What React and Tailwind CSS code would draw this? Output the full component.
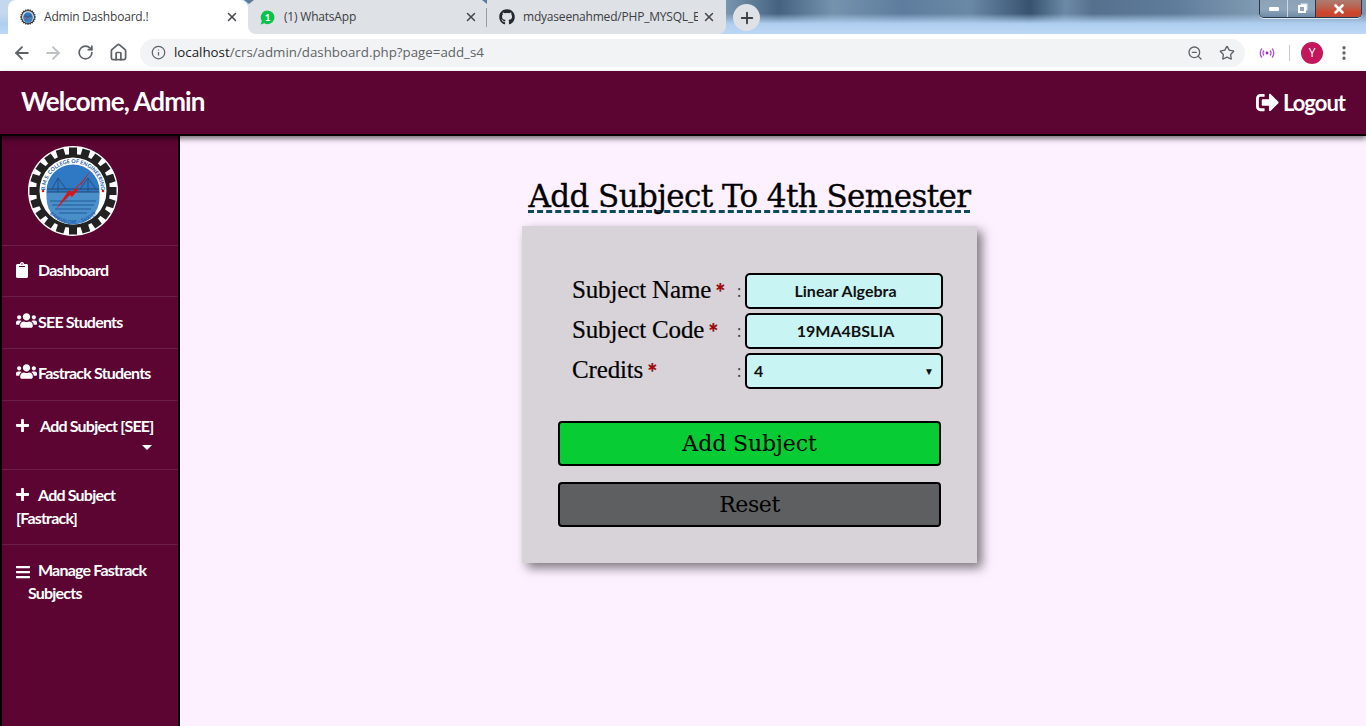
import React from "react";
import { ArrowLeft, ArrowRight, RotateCw, Home, Info, ZoomOut, Star, X, Plus, EllipsisVertical } from "lucide-react";
import { FaClipboard, FaUsers, FaPlus, FaBars, FaSignOutAlt, FaGithub } from "react-icons/fa";

const sans = "font-['Lato','Open_Sans',sans-serif]";
const slab = "font-['DejaVu_Serif',serif]";
const label = "font-['Liberation_Serif',serif]";

function Logo({ size = 90 }) {
  const teeth = Array.from({ length: 20 }, (_, i) => i * 18);
  return (
    <svg width={size} height={size} viewBox="0 0 90 90">
      <defs>
        <path id="arcTop" d="M 17 45 A 28 28 0 0 1 73 45" />
        <path id="arcBottom" d="M 16 60 A 32.6 32.6 0 0 0 74 60" />
      </defs>
      <circle cx="45" cy="45" r="45" fill="#fff" />
      {teeth.map((a) => (
        <rect key={a} x="41" y="1.5" width="8" height="10" fill="#222" transform={`rotate(${a} 45 45)`} />
      ))}
      <circle cx="45" cy="45" r="37" fill="#222" />
      <circle cx="45" cy="45" r="33.5" fill="#fff" />
      <circle cx="45" cy="45" r="26.5" fill="#2f78c4" />
      <path d="M18.5 46h53v6a26.5 26.5 0 0 1-53 0z" fill="#4a8fca" />
      <path d="M22 55h46M24 59h42M27 63h36M31 67h28" stroke="#1f5b98" strokeWidth="1.2" />
      <path d="M19 43h52M19 46h52" stroke="#24466e" strokeWidth="1.2" />
      <path d="M24 43 30 32 38 43M52 43l8-11 8 11M30 32v14M60 32v14" stroke="#24466e" strokeWidth="0.8" fill="none" />
      <path d="M63 24 48 43l2 1-6 7-2-2-14 14 13-19 3 2 7-8 2 1z" fill="#d81616" />
      <circle cx="15" cy="45" r="1.3" fill="#c81e1e" />
      <circle cx="75" cy="45" r="1.3" fill="#c81e1e" />
      <text fontSize="5.4" fontWeight="700" fill="#1e5da8" fontFamily="Lato, sans-serif">
        <textPath href="#arcTop" startOffset="50%" textAnchor="middle">B.M.S. COLLEGE OF ENGINEERING</textPath>
      </text>
      <text fontSize="5" fontWeight="700" fill="#1e5da8" fontFamily="Lato, sans-serif">
        <textPath href="#arcBottom" startOffset="50%" textAnchor="middle">BANGALORE - 560019</textPath>
      </text>
    </svg>
  );
}

function Tab({ icon, title, className, closeClass = "" }) {
  return (
    <div className={`flex h-[34px] items-center pl-3 text-[12px] tracking-[-0.2px] text-[#3c4043] font-['Open_Sans',sans-serif] ${className}`}>
      <span className="flex w-6 shrink-0 items-center">{icon}</span>
      <span className="min-w-0 flex-1 overflow-hidden whitespace-nowrap">{title}</span>
      <X size={14} strokeWidth={2.5} className={`ml-1 shrink-0 text-[#44474b] ${closeClass}`} />
    </div>
  );
}

function WhatsAppIcon() {
  return (
    <svg width="15" height="15" viewBox="0 0 15 15">
      <path d="M7.6 0.5a6.8 6.8 0 1 1-3.2 12.8L0.6 14.5l1.2-3.6A6.8 6.8 0 0 1 7.6 0.5z" fill="#0bc24a" />
      <text x="7.6" y="11" textAnchor="middle" fontSize="10" fontWeight="700" fill="#fff" fontFamily="Lato, sans-serif">1</text>
    </svg>
  );
}

function TabStrip() {
  return (
    <div className="relative flex h-[34px] items-end bg-[linear-gradient(180deg,transparent_0%,transparent_40%,#b0cff0_70%,#bcd8f5_100%),linear-gradient(90deg,#c3d8ee_0%,#c3d8ee_50%,#7b98b1_53%,#456280_57%,#7593ad_61%,#5e7d9e_66%,#6a89a6_71%,#36526f_75.4%,#6c8aa6_78%,#54708d_80%,#5f7d9b_86%,#7f9ab2_92%,#7b96ae_100%)] pl-2">
      <Tab title="Admin Dashboard.!" icon={<Logo size={16} />} className="w-[240px] rounded-t-lg bg-white pr-[9px]" />
      <div className="relative w-[239px] bg-white">
        <Tab title="(1) WhatsApp" icon={<WhatsAppIcon />} className="rounded-bl-lg bg-[#dee1e6] pr-[9px]" />
        <span className="absolute left-[-4px] top-0 h-0 w-0 border-x-[5px] border-t-[4px] border-x-transparent border-t-[#5c7b9c]" />
        <span className="absolute right-[-5px] top-0 h-0 w-0 border-x-[5px] border-t-[4px] border-x-transparent border-t-[#5c7b9c]" />
      </div>
      <div className="relative w-[239px]">
        <span className="absolute left-[-1px] top-[8px] h-[19px] w-px bg-[#9a9da1]" />
        <Tab
          title="mdyaseenahmed/PHP_MYSQL_E"
          icon={<FaGithub size={16} className="text-[#24292e]" />}
          className="rounded-br-lg bg-[#dee1e6] pr-[10px]"
        />
      </div>
      <span className="ml-[7px] mb-[3px] flex h-[27px] w-[27px] items-center justify-center rounded-full bg-[#dee1e6]">
        <Plus size={18} strokeWidth={2.5} className="text-[#3c4043]" />
      </span>
      {/* window buttons */}
      <div className="absolute right-[4px] top-0 flex h-[18px] w-[103px] overflow-hidden rounded-b-[5px] border border-t-0 border-[#26384c] shadow-[0_1px_0_rgba(255,255,255,0.7)]">
        <span className="flex w-[28px] items-center justify-center border-r border-[#dfe7ee]/80 bg-[linear-gradient(180deg,#8da2b6,#8fa6bb_55%,#6e8aa5)]">
          <span className="h-[4px] w-[10px] rounded-[1px] bg-white" />
        </span>
        <span className="flex w-[28px] items-center justify-center border-r border-[#26384c] bg-[linear-gradient(180deg,#8da2b6,#8fa6bb_55%,#6e8aa5)]">
          <span className="relative h-[8px] w-[8px] border-2 border-white shadow-[2px_-2px_0_-0.5px_#e8eef5]" />
        </span>
        <span className="flex flex-1 items-center justify-center bg-[linear-gradient(180deg,#ad7c72,#b9604d_45%,#d2432a_75%,#b94a36)]">
          <X size={14} strokeWidth={4.5} className="text-white" />
        </span>
      </div>
    </div>
  );
}

function Toolbar() {
  return (
    <div className="flex h-[37px] items-center bg-white">
      <ArrowLeft size={20} strokeWidth={2.2} className="ml-[12px] text-[#5f6368]" />
      <ArrowRight size={20} strokeWidth={2.2} className="ml-[11px] text-[#bdc1c6]" />
      <RotateCw size={17} strokeWidth={2.4} className="ml-[14px] text-[#5f6368]" />
      <Home size={19} strokeWidth={2.2} className="ml-[15px] text-[#5f6368]" />
      <div className="ml-[12px] flex h-[28px] w-[1105px] items-center rounded-full bg-[#f1f3f4] pl-[11px] pr-[10px]">
        <Info size={15} strokeWidth={2} className="text-[#5f6368]" />
        <span className="ml-[8px] flex-1 text-[13.3px] text-[#5f6368] font-['Open_Sans',sans-serif]">
          <span className="text-[#202124]">localhost</span>/crs/admin/dashboard.php?page=add_s4
        </span>
        <ZoomOut size={16} strokeWidth={2} className="text-[#5f6368]" />
        <Star size={16} strokeWidth={2} className="ml-[16px] text-[#5f6368]" />
      </div>
      <svg width="16" height="12" viewBox="0 0 16 12" className="ml-[14px]" fill="none" stroke="#b44fd0" strokeWidth="1.3">
        <circle cx="8" cy="6" r="1.4" fill="#9c27b0" stroke="none" />
        <path d="M5 3.5a3.5 3.5 0 0 0 0 5M11 3.5a3.5 3.5 0 0 1 0 5M3 1.5a6.5 6.5 0 0 0 0 9M13 1.5a6.5 6.5 0 0 1 0 9" />
      </svg>
      <span className="ml-[14px] h-[16px] w-px bg-[#c8cacd]" />
      <span className="ml-[11px] flex h-[22px] w-[22px] items-center justify-center rounded-full bg-[#c2185b] text-[12px] text-white font-['Open_Sans',sans-serif]">Y</span>
      <EllipsisVertical size={18} strokeWidth={2.5} className="ml-[12px] text-[#5f6368]" />
    </div>
  );
}

function NavItem({ icon, className, children }) {
  return (
    <div className={`border-b border-[#6d1d49] px-[14px] text-[16px] leading-[23px] font-bold tracking-[-0.8px] text-white ${sans} ${className}`}>
      {icon}
      {children}
    </div>
  );
}

function Sidebar() {
  return (
    <aside className="w-[180px] shrink-0 border-x-2 border-black bg-[#5c0432]">
      <div className="flex h-[110px] justify-center border-b border-[#6d1d49] pr-[34px] pt-[10px]">
        <Logo />
      </div>
      <NavItem className="h-[51px] pt-[12px]" icon={<FaClipboard className="ml-[-2px] mr-[8px] inline-block align-[-2px] text-[16px]" />}>Dashboard</NavItem>
      <NavItem className="h-[52px] pt-[13px]" icon={<FaUsers className="mr-[1px] inline-block align-[-3px] text-[21px]" />}>SEE Students</NavItem>
      <NavItem className="h-[52px] pt-[12px]" icon={<FaUsers className="mr-[1px] inline-block align-[-3px] text-[21px]" />}>Fastrack Students</NavItem>
      <NavItem className="h-[69px] pt-[13px]" icon={<FaPlus className="ml-[-1px] mr-[10px] inline-block align-[-1px] text-[15px]" />}>
        Add Subject [SEE]
        <div className="mt-[8px] flex justify-end pr-[12px]">
          <span className="h-0 w-0 border-x-[5px] border-t-[5px] border-x-transparent border-t-white" />
        </div>
      </NavItem>
      <NavItem className="h-[75px] pt-[13px]" icon={<FaPlus className="ml-[-1px] mr-[8px] inline-block align-[-1px] text-[15px]" />}>
        Add Subject
        <br />
        [Fastrack]
      </NavItem>
      <div className={`pl-[26px] pt-[13px] pr-[14px] text-[16px] leading-[23px] font-bold tracking-[-0.8px] text-white ${sans}`}>
        <FaBars className="ml-[-13px] mr-[7px] inline-block text-[16px]" />
        Manage Fastrack Subjects
      </div>
    </aside>
  );
}

function Field({ name, value, select }) {
  return (
    <div className="flex h-[36px] items-center">
      <div className={`mb-[1px] w-[165px] text-[25px] tracking-[-0.15px] text-black [-webkit-text-stroke:0.2px_black] ${label}`}>
        {name}
        <span className={`ml-[4px] align-[-4px] font-bold text-[#c00000] ${sans} text-[24px]`}>*</span>
      </div>
      <span className="w-[8px] text-[16px] text-[#444]">:</span>
      <div className={`flex h-[36px] w-[198px] items-center rounded-[5px] border-2 border-black bg-[#c9f4f4] text-[16px] font-bold text-[#111] ${sans} ${select ? "justify-between px-[7px]" : "justify-center pl-[3px]"}`}>
        <span>{value}</span>
        {select && <span className="text-[10px]">▼</span>}
      </div>
    </div>
  );
}

function SubjectForm() {
  return (
    <main className="flex-1 bg-[#fdf0ff] pl-[342px]">
      <h1 className={`mt-[41px] w-[455px] text-center text-[31px] leading-[38px] tracking-[-0.6px] text-black [-webkit-text-stroke:0.3px_black] ${slab}`}>
        <span className="underline decoration-[#0b4a5c] decoration-dashed decoration-[3px] underline-offset-[3px] [text-decoration-skip-ink:none]">Add Subject To 4th Semester</span>
      </h1>
      <div className="mt-[11px] h-[337px] w-[455px] bg-[#d8d3d9] pl-[36px] pt-[47px] shadow-[5px_5px_10px_rgba(0,0,0,0.5)]">
        <div className="ml-[14px] flex w-[371px] flex-col gap-[4px]">
          <Field name="Subject Name" value="Linear Algebra" />
          <Field name="Subject Code" value="19MA4BSLIA" />
          <Field name="Credits" value="4" select />
        </div>
        <div className="mt-[32px] flex w-[383px] flex-col gap-[16px]">
          <button className={`h-[45px] rounded-[4px] border-2 border-black bg-[#07cc33] text-[22px] tracking-[-0.1px] text-black ${slab}`}>Add Subject</button>
          <button className={`h-[45px] rounded-[4px] border-2 border-black bg-[#5e5f60] text-[22px] tracking-[-0.4px] text-black ${slab}`}>Reset</button>
        </div>
      </div>
    </main>
  );
}

export default function App() {
  return (
    <div className="flex h-[726px] w-[1366px] flex-col overflow-hidden">
      <div className="h-[71px] shrink-0">
        <TabStrip />
        <Toolbar />
      </div>
      <header className={`relative z-10 flex h-[65px] shrink-0 items-center justify-between border-b-2 border-black bg-[#5c0432] px-[21px] text-white shadow-[0_3px_5px_rgba(0,0,0,0.5)] ${sans}`}>
        <span className="pb-[3px] text-[26px] font-bold tracking-[-0.9px]">Welcome, Admin</span>
        <span className="flex items-center gap-[4px] text-[22px] font-bold tracking-[-1px]">
          <FaSignOutAlt className="text-[23px]" /> Logout
        </span>
      </header>
      <div className="flex min-h-0 flex-1">
        <Sidebar />
        <SubjectForm />
      </div>
    </div>
  );
}
